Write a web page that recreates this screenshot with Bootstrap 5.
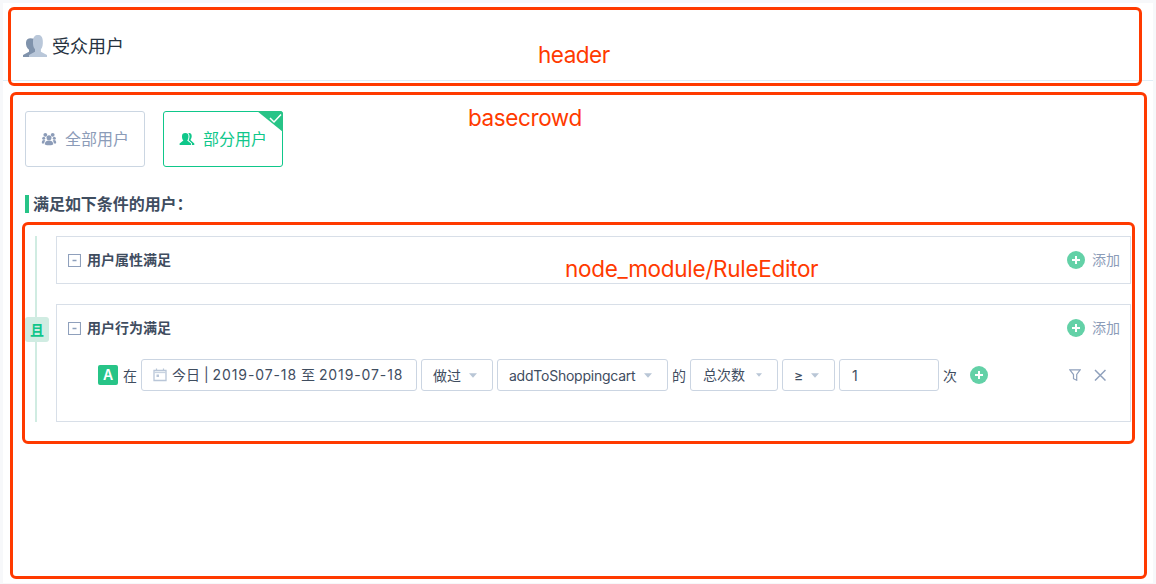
<!DOCTYPE html>
<html lang="zh-CN">
<head>
<meta charset="utf-8">
<meta name="viewport" content="width=device-width, initial-scale=1">
<title>受众用户</title>
<link rel="stylesheet" href="https://cdn.jsdelivr.net/npm/bootstrap@5.3.0/dist/css/bootstrap.min.css">
<style>
body{background:#f7f8fa;font-family:Inter,"Noto Sans CJK SC",sans-serif;font-size:14px;line-height:20px;color:#3f4d5f;height:584px;overflow:hidden}
svg{display:block;flex:none}
.page{margin:3px 3px 0;height:580px}
.page-head{height:78px;padding:9px 20px 0;border-bottom:1px solid #e0edf5}
.page-head h1{font-size:18px;line-height:24px;color:#26323f;font-weight:400;padding:2px 0 0 1px}
.page-body{padding:30px 22px 0}
.crowd{width:120px;height:56px;border:1px solid #cbd6e2;border-radius:3px;font-size:16px;line-height:24px;color:#8c9cb8;padding:0 0 0 15px;gap:8px;background:#fff}
.crowd.active{border-color:#0fc78a;color:#0fc78a}
.crowd .corner{top:-1px;right:-1px}
.cond{height:18px;margin-top:28px;border-left:4px solid #27c487;padding-left:4px;font-size:16px;line-height:18px;font-weight:700;letter-spacing:-.05px}
.editor{margin-top:23px;height:186px}
.joint{width:24px;margin-right:7px}
.joint .rail{width:2px;background:#d0ece2;margin-right:2px}
.joint .op{width:24px;height:25px;background:#d0ece2;color:#10c58a;border-radius:3px;font-weight:700;line-height:25px}
.group{border:1px solid #d8dfe8;padding:0 10px 0 11px}
.group-head{height:46px}
.group-head b{font-weight:700;padding-left:6px}
.add{color:#8c9cb8;gap:7px}
.rule{height:32px;margin:8px 0 0 30px}
.tag{width:20px;height:20px;background:#27c487;border-radius:2px;color:#fff;font-weight:600}
.box{height:32px;border:1px solid #cbd5e2;border-radius:3px;padding:0 11px;margin-right:4px;white-space:nowrap}
.low{padding-top:2px}
.box.low svg{margin-top:-2px}
.num{letter-spacing:.9px}
.event-name{letter-spacing:-.24px}
.frame-note{border:3px solid #ff3a00;border-radius:6px;pointer-events:none}
.note{color:#ff3a00;font-size:22.5px;line-height:28px;letter-spacing:-.3px;white-space:nowrap}
</style>
</head>
<body class="position-relative">
<svg width="0" height="0" class="position-absolute"><defs>
<symbol id="plus" viewBox="0 0 18 18"><circle cx="9" cy="9" r="9" fill="#63d1a7"/><path d="M9 5v8M5 9h8" stroke="#fff" stroke-width="2"/></symbol>
<symbol id="minus" viewBox="0 0 13 13"><path d="M.5.5h12v12H.5z" fill="none" stroke="#8fa0bc" stroke-width="1.100"/><path d="M4.500 6.500h4" stroke="#8fa0bc" stroke-width="1.500"/></symbol>
<symbol id="caret" viewBox="0 0 8 5"><path d="M0 .3h8L4 4.700z" fill="#b9c6d6"/></symbol>
</defs></svg>
<main class="page bg-white">
  <header class="page-head d-flex align-items-center">
    <svg width="24" height="23" viewBox="0 0 24 23"><path d="M0 22v-2l6-3.200v-2C3.700 13 2.700 10 3 7.200 3.200 4.500 5 3.200 7.500 3.200L13 4v18z" fill="#8093ac"/><path d="M6 22v-2l6-3.300v-2.500C10.300 12.500 9.800 10 10 5.800 10.200 1.800 12 0 15 0s4.600 1.800 4.800 5.800-.2 6.800-1.900 8.400v2.500l6.100 3.300v2z" fill="#b9c7d9"/></svg>
    <h1 class="mb-0 ms-1">受众用户</h1>
  </header>
  <section class="page-body">
    <div class="d-flex" style="gap:18px">
      <button type="button" class="crowd d-flex align-items-center">
        <svg width="16" height="14" viewBox="0 0 16 14" fill="#8c9cb8"><circle cx="4.300" cy="2.800" r="1.900"/><circle cx="11.700" cy="2.800" r="1.900"/><circle cx="2.700" cy="6.200" r="1.500"/><circle cx="13.300" cy="6.200" r="1.500"/><circle cx="8" cy="5.800" r="2.500"/><path d="M1 11.500q-.8-3.500 2-3.500l1.300.4q-1 1.100-1.100 3.100zM15 11.500q.8-3.500-2-3.500l-1.300.4q1 1.100 1.100 3.100zM3.800 12.500q0-4 4.200-4t4.200 4q-4.200 1.700-8.400 0z"/></svg>
        <span>全部用户</span>
      </button>
      <button type="button" class="crowd active d-flex align-items-center position-relative">
        <svg width="16" height="14" viewBox="0 0 16 14" fill="#0fc78a"><path d="M.6 13v-1.500l3.800-3C3 7 3 5.500 3 4.200 3 2 4.100 1 6.300 1s3.200 1 3.200 3.200c0 1.300-.1 2.800-1.300 4.300l3.800 3V13zM9.300 1.100c2-.5 3.400.7 3.400 3 0 1.500-.4 2.800-1.300 4l3.900 3.400V13h-2.400v-1.800L9.600 8.300C11 5.500 10.800 2.800 9.300 1.100z"/></svg>
        <span>部分用户</span>
        <svg class="corner position-absolute" width="26" height="21" viewBox="0 0 26 21"><path d="M0 0h23q3 0 3 3v18z" fill="#27c487"/><path d="M13 7l4 4 7-7.500" fill="none" stroke="#fff" stroke-width="1.500"/></svg>
      </button>
    </div>
    <div class="cond">满足如下条件的用户：</div>
    <div class="editor d-flex">
      <div class="joint d-flex flex-column align-items-center">
        <div class="rail flex-fill"></div><div class="op text-center">且</div><div class="rail flex-fill"></div>
      </div>
      <div class="flex-fill d-flex flex-column" style="gap:20px">
        <div class="group" style="height:48px">
          <div class="group-head d-flex align-items-center"><svg width="13" height="13"><use href="#minus"/></svg><b>用户属性满足</b>
            <span class="add ms-auto d-flex align-items-center"><svg width="18" height="18"><use href="#plus"/></svg>添加</span></div>
        </div>
        <div class="group flex-fill">
          <div class="group-head d-flex align-items-center"><svg width="13" height="13"><use href="#minus"/></svg><b>用户行为满足</b>
            <span class="add ms-auto d-flex align-items-center"><svg width="18" height="18"><use href="#plus"/></svg>添加</span></div>
          <div class="rule d-flex align-items-center">
            <span class="tag text-center">A</span><span class="low" style="width:23px;padding-left:5px">在</span>
            <span class="box d-flex align-items-center" style="width:276px"><svg width="14" height="14" viewBox="0 0 14 14"><path d="M1 2.500h12v10H1z" fill="none" stroke="#b9c6d8" stroke-width="1.300"/><path d="M1 4.500h12" stroke="#c9d3e0" stroke-width="1.300"/><path d="M3.500 .5v2M10.500 .5v2" stroke="#b9c6d8" stroke-width="1.200"/><path d="M3.500 6.500h2.500V9H3.500z" fill="#b9c6d8"/></svg><span style="padding-left:5px">今日 | <span class="num">2019-07-18</span> 至 <span class="num">2019-07-18</span></span></span>
            <span class="box low d-flex align-items-center" style="width:72px">做过<svg class="ms-auto me-1" width="8" height="5"><use href="#caret"/></svg></span>
            <span class="box low d-flex align-items-center" style="width:171px"><span class="event-name">addToShoppingcart</span><svg class="ms-auto me-1" width="8" height="5"><use href="#caret"/></svg></span>
            <span class="low" style="width:18px">的</span>
            <span class="box d-flex align-items-center" style="width:88px;padding-left:12px"><span>总次数</span><svg class="ms-auto me-1" width="6" height="4"><use href="#caret"/></svg></span>
            <span class="box low d-flex align-items-center" style="width:53px">≥<svg class="ms-auto me-1" width="8" height="5"><use href="#caret"/></svg></span>
            <span class="box low d-flex align-items-center" style="width:100px;padding-left:12px">1</span>
            <span class="low">次</span><svg style="margin-left:13px" width="18" height="18"><use href="#plus"/></svg>
            <span class="ms-auto d-flex align-items-center" style="gap:13px;padding-right:14px">
              <svg width="12" height="12" viewBox="0 0 12 12" fill="none" stroke="#8fa0bc" stroke-width="1.200"><path d="M.8.9h10.400L7.700 5.500v5.700L4.500 9.700V5.500z"/></svg>
              <svg width="12" height="12" viewBox="0 0 12 12" stroke="#8fa0bc" stroke-width="1.500"><path d="M1 1l10.500 10.500M11.500 1L1 11.500"/></svg>
            </span>
          </div>
        </div>
      </div>
    </div>
  </section>
</main>
<!-- module annotations laid over the page -->
<div class="frame-note position-absolute" style="left:8px;top:7px;width:1134px;height:79px"></div>
<div class="frame-note position-absolute" style="left:10px;top:92px;width:1137px;height:487px"></div>
<div class="frame-note position-absolute" style="left:22px;top:222px;width:1113px;height:222px"></div>
<div class="note position-absolute" style="left:538px;top:41px;letter-spacing:-.5px">header</div>
<div class="note position-absolute" style="left:468px;top:104px;letter-spacing:-.4px">basecrowd</div>
<div class="note position-absolute" style="left:565px;top:255px">node_module/RuleEditor</div>
<script src="https://cdn.jsdelivr.net/npm/bootstrap@5.3.0/dist/js/bootstrap.bundle.min.js"></script>
</body>
</html>
